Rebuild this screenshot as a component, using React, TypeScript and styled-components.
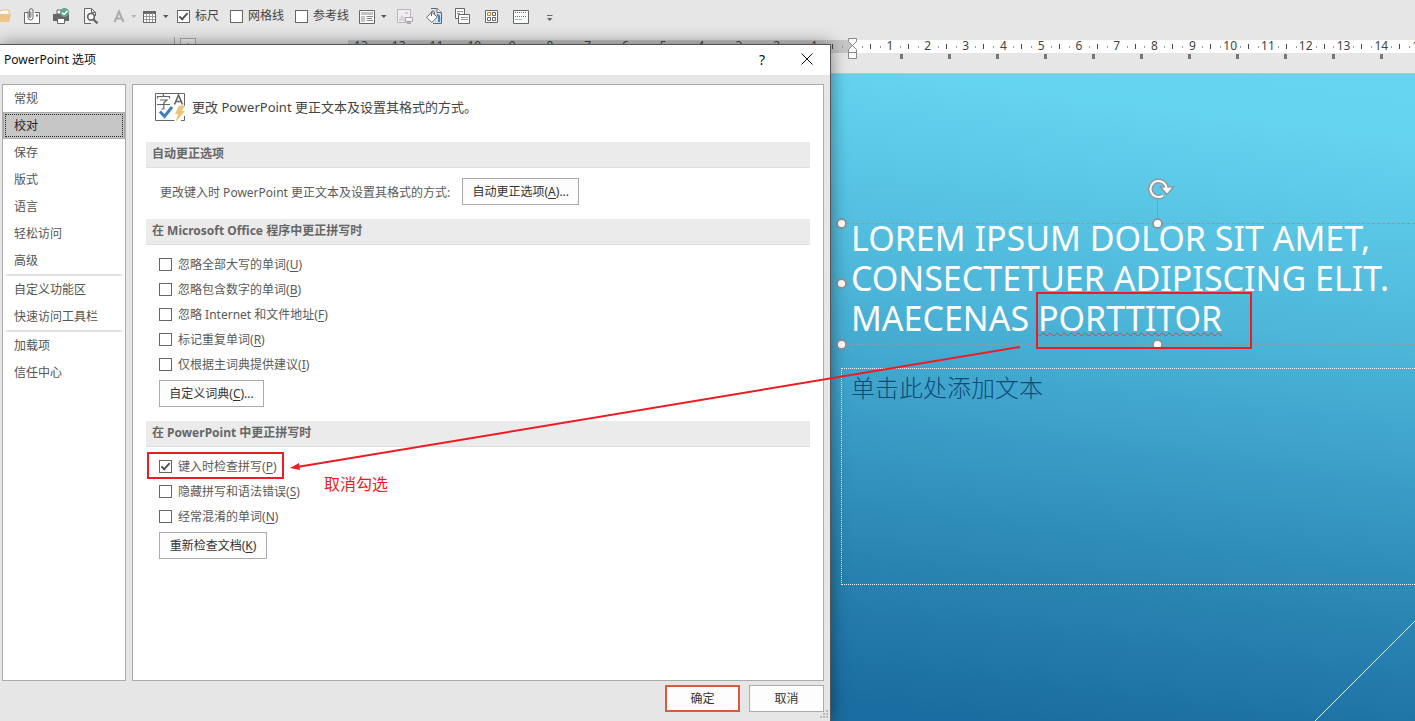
import React from "react";
import styled, { createGlobalStyle, css } from "styled-components";

const UI_FONT = '"Noto Sans", "Noto Sans CJK SC", sans-serif';

const GlobalStyle = createGlobalStyle`
  *, *::before, *::after { box-sizing: border-box; }
  body { margin: 0; background: #e6e6e6; font-family: ${UI_FONT}; font-size: 12px; color: #444; }
  button, input { font: inherit; color: inherit; margin: 0; }
  h1, h2, p, ul { margin: 0; padding: 0; font: inherit; }
  u { text-underline-offset: 2px; }
`;

const Window = styled.div`
  position: relative;
  display: flex;
  flex-direction: column;
  min-height: 100vh;
  overflow: hidden;
`;

/* ---------- toolbar ---------- */

const Toolbar = styled.header`
  display: flex;
  align-items: center;
  height: 32px;
  flex: none;
`;

const ToolButton = styled.button<{ $before: number; $width?: number }>`
  flex: none;
  display: flex;
  width: ${(p) => p.$width ?? 16}px;
  height: 18px;
  margin-left: ${(p) => p.$before}px;
  padding: 1px 0;
  border: 0;
  background: none;
`;

const CheckBox = styled.input.attrs({ type: "checkbox" })`
  appearance: none;
  flex: none;
  display: flex;
  justify-content: center;
  width: 13px;
  height: 13px;
  border: 1px solid #666;
  background: #fff;
  &:checked::after {
    content: "";
    width: 5px;
    height: 9px;
    border: solid #555;
    border-width: 0 2px 2px 0;
    transform: rotate(42deg);
  }
`;

const CheckLabel = styled.label<{ $before?: number }>`
  flex: none;
  display: flex;
  align-items: center;
  gap: 5px;
  height: 25px;
  margin-left: ${(p) => p.$before ?? 0}px;
  line-height: 18px;
  white-space: nowrap;
`;

/* ---------- workspace ---------- */

const RulerRow = styled.div`
  display: flex;
  flex: none;
  height: 41px;
  padding-top: 5px;
`;

const ThumbEdge = styled.div`
  flex: none;
  width: 175px;
  border-right: 1px solid #ababab;
`;

const ScrollUp = styled.button`
  flex: none;
  display: flex;
  justify-content: center;
  width: 16px;
  height: 17px;
  margin: 1px 152px 0 5px;
  padding: 4px 0 0;
  border: 1px solid #ababab;
  background: #f0f0f0;
`;

const RulerArea = styled.div`
  position: relative;
  flex: 1;
  min-width: 0;
  padding-top: 3px;
`;

const Ruler = styled.div`
  height: 13px;
  overflow-x: clip;
  background: linear-gradient(90deg, #c6c6c6 504px, #fff 504px);
`;

const RulerScale = styled.div`
  display: grid;
  grid-template-columns: repeat(29, 1fr);
  width: 1096px;
  margin-left: -6px;
`;

const RulerCell = styled.span`
  height: 13px;
  line-height: 12px;
  text-align: center;
  color: #444;
  background:
    linear-gradient(#444, #444) right 4px / 1px 5px no-repeat,
    linear-gradient(#999, #999) 24% 6px / 1px 2px no-repeat,
    linear-gradient(#999, #999) 78% 6px / 1px 2px no-repeat;
`;

const TabStops = styled.div`
  height: 5px;
  margin: 1px 0 0 552px;
  background: repeating-linear-gradient(90deg, #777 0 3px, transparent 3px 48px);
`;

const IndentMarker = styled.svg`
  position: absolute;
  left: 498px;
  top: 1px;
`;

const Workspace = styled.div`
  display: flex;
  flex: 1;
  border-top: 1px solid #bcc4c8;
`;

const BehindDialog = styled.div`
  flex: none;
  width: 831px;
`;

const Slide = styled.main`
  position: relative;
  flex: 1;
  min-width: 0;
  overflow: hidden;
  background: linear-gradient(187deg, #66d5f1 0%, #65d4f0 9%, #4db6d9 38%, #3a9cc6 58%, #2a85b3 76%, #1a6da0 97%);
`;

const TitleBox = styled.section`
  position: absolute;
  left: 10px;
  right: -60px;
  top: 149px;
  height: 122px;
  border: 1px dashed #8f9a9e;
  padding-left: 9px;
`;

const TitleText = styled.h1`
  font-family: "Noto Sans", "Open Sans", sans-serif;
  font-size: 34px;
  line-height: 40px;
  color: #fff;
  white-space: pre;
  margin-top: -6px;
`;

const TitleLine = styled.span`
  display: block;
`;

const Misspelled = styled.span`
  text-decoration: underline wavy #e0393e 1px;
  text-underline-offset: 1px;
  text-decoration-skip-ink: none;
`;

const BodyBox = styled.section`
  position: absolute;
  left: 10px;
  right: -60px;
  top: 294px;
  height: 217px;
  border: 1px dotted #f2f6f8;
  padding-left: 9px;
  font-size: 24px;
  font-weight: 300;
  line-height: 37px;
  color: #0f4c78;
`;

const SlideDrawing = styled.svg`
  position: absolute;
  inset: 0;
  width: 100%;
  height: 100%;
`;

/* ---------- options dialog ---------- */

const Dialog = styled.div`
  position: absolute;
  left: 0;
  top: 44px;
  bottom: 0;
  width: 831px;
  display: flex;
  flex-direction: column;
  border: solid #555;
  border-width: 1px 1px 0 0;
  background: #e6e6e6;
  box-shadow: 0 0 16px rgba(0, 0, 0, 0.45);
`;

const TitleBar = styled.div`
  display: flex;
  align-items: center;
  height: 30px;
  flex: none;
  padding: 0 16px 0 4px;
  background: #fff;
  color: #111;
`;

const Caption = styled.h2`
  flex: 1;
  padding-bottom: 2px;
`;

const CaptionButton = styled.button`
  width: 14px;
  height: 20px;
  margin-left: 31px;
  padding: 0;
  border: 0;
  background: none;
  font-size: 14px;
  line-height: 20px;
  color: #111;
`;

const DialogBody = styled.div`
  display: flex;
  flex: 1;
  gap: 6px;
  padding: 9px 6px 0 2px;
`;

const Nav = styled.nav`
  width: 124px;
  flex: none;
  display: flex;
  flex-direction: column;
  border: 1px solid #ababab;
  background: #fff;
`;

const NavItem = styled.button<{ $selected?: boolean }>`
  flex: none;
  height: 27px;
  padding: 0 0 2px 11px;
  border: 0;
  background: none;
  text-align: left;
  color: #555;
  ${(p) =>
    p.$selected &&
    css`
      background: #c6c6c6;
      color: #222;
      border: 1px solid #ababab;
      padding-left: 10px;
      outline: 1px dotted #222;
      outline-offset: -3px;
    `}
`;

const NavRule = styled.hr`
  flex: none;
  width: 116px;
  height: 2px;
  margin: 0 auto;
  border: 0;
  background: #e1e1e1;
`;

const Panel = styled.div`
  flex: 1;
  border: 1px solid #ababab;
  background: #fff;
  padding: 7px 13px;
  color: #5a5a5a;
`;

const Intro = styled.p`
  display: flex;
  align-items: center;
  gap: 6px;
  height: 30px;
  margin: 0 0 20px 8px;
  font-size: 13px;
  color: #444;
`;

const IntroText = styled.span`
  padding-bottom: 2px;
`;

const GroupTitle = styled.h2`
  height: 26px;
  padding-left: 6px;
  border-bottom: 1px solid #dedede;
  background: #ebebeb;
  font-weight: 700;
  line-height: 24px;
  color: #666;
`;

const SettingRow = styled.div`
  display: flex;
  align-items: center;
  gap: 12px;
  padding: 10px 0 14px 14px;
`;

const Options = styled.div`
  display: flex;
  flex-direction: column;
  align-items: flex-start;
  padding: 7px 0 14px 13px;
`;

const OptionLabel = styled(CheckLabel)`
  gap: 6px;
`;

const PushButton = styled.button<{ $width: number; $default?: boolean; $spaced?: boolean }>`
  width: ${(p) => p.$width}px;
  height: 27px;
  margin-top: ${(p) => (p.$spaced ? 3 : 0)}px;
  padding: 0 0 1px;
  border: ${(p) => (p.$default ? "2px solid #dc5939" : "1px solid #ababab")};
  background: #fdfdfd;
  color: #333;
  white-space: nowrap;
`;

const Footer = styled.div`
  display: flex;
  justify-content: flex-end;
  gap: 9px;
  flex: none;
  padding: 4px 6px 9px 0;
`;

const Grip = styled.svg`
  position: absolute;
  right: 1px;
  bottom: 2px;
`;

/* ---------- annotations ---------- */

const Highlight = styled.div<{ $x: number; $y: number; $w: number; $h: number }>`
  position: absolute;
  left: ${(p) => p.$x}px;
  top: ${(p) => p.$y}px;
  width: ${(p) => p.$w}px;
  height: ${(p) => p.$h}px;
  border: 2px solid #ed1c24;
  pointer-events: none;
`;

const ArrowLayer = styled.svg`
  position: absolute;
  inset: 0;
  width: 100%;
  height: 100%;
  pointer-events: none;
`;

const Note = styled.p`
  position: absolute;
  left: 324px;
  top: 472px;
  font-size: 16px;
  line-height: 24px;
  color: #ed1c24;
`;

/* ---------- icons ---------- */

const Icon = ({ children, w = 16 }: { children: React.ReactNode; w?: number }) => (
  <svg width={w} height="16" viewBox={`0 0 ${w} 16`} fill="none" stroke="#666" strokeWidth="1" aria-hidden="true">
    {children}
  </svg>
);

const Caret = ({ color = "#555" }: { color?: string }) => (
  <Icon w={6}>
    <path d="M0 7h5.5L2.75 10z" fill={color} stroke="none" />
  </Icon>
);

const FolderIcon = () => (
  <Icon>
    <path d="M1 5V3h5l1-1h7v4" fill="#fff" stroke="#eabf7c" />
    <path d="M0 6h16l-1.5 8H0z" fill="#eec683" stroke="none" />
  </Icon>
);
const MailClipIcon = () => (
  <Icon>
    <path d="M4 4.5H.5v11h15v-11H11" fill="#fff" />
    <path d="M4 3.500v6a2.500 2.500 0 0 0 5 0V2.500a1.800 1.800 0 0 0-3.600 0V9a.8.8 0 0 0 1.500 0V4" />
    <path d="M12 6.500h2v2h-2z" fill="#3f7dbd" stroke="none" />
  </Icon>
);
const PrinterIcon = () => (
  <Icon>
    <path d="M4 2h5v4H4z" fill="#fff" />
    <path d="M0 6h16v7H0z" fill="#666" stroke="none" />
    <path d="M4.500 10.500h7v5h-7z" fill="#fff" />
    <circle cx="11.500" cy="4.500" r="4.500" fill="#5fa58d" stroke="none" />
    <path d="M9 4.500l2 2 3.500-3.800" stroke="#fff" strokeWidth="1.300" />
  </Icon>
);
const PreviewIcon = () => (
  <Icon>
    <path d="M8 15.500H1.500V.500h7l4 4V8M8.500.500v4h4" fill="#f4f4f4" />
    <circle cx="8" cy="8.800" r="3.300" fill="#fff" strokeWidth="1.600" />
    <path d="M10.300 11.200l4.200 4.200" strokeWidth="2.200" />
  </Icon>
);
const TableIcon = () => (
  <Icon>
    <path d="M1.500 3.500h12v11h-12z" fill="#fff" />
    <path d="M1 3h13v3H1z" fill="#666" stroke="none" />
    <path d="M1.500 8.500h12M1.500 11.500h12M4.500 5v9.500M7.500 5v9.500M10.500 5v9.500" stroke="#999" />
    <path d="M1.500 3.500h12v11h-12z" />
  </Icon>
);
const LayoutIcon = () => (
  <Icon>
    <path d="M.5 2.500h15v13H.5z" fill="#fff" />
    <path d="M2 4h12v3H2zM2 8h4v6H2z" fill="#c4c4c4" stroke="none" />
    <path d="M7.500 8.500H14M7.500 10.500H13M7.500 12.500H14" stroke="#888" />
  </Icon>
);
const PictureIcon = () => (
  <Icon>
    <path d="M.5 1.500h13v13H.5z" fill="#f1ebf2" stroke="#b9b3ba" />
    <circle cx="9.500" cy="5" r="1.300" fill="#d0c8d1" stroke="none" />
    <path d="M2 11l3-4 4 4v2H2z" fill="#d9d2da" stroke="none" />
    <path d="M8.500 9.500h7v4h-7zM12 13.500v2M10 15.500h4" fill="#f4f0f5" stroke="#aaa5ab" />
  </Icon>
);
const FillIcon = () => (
  <Icon>
    <path d="M5 .5h6l4.500 4v11H7" fill="#d5e3f0" />
    <path d="M11 .5v4h4.500" fill="#fff" />
    <path d="M11 7c2.500 0 2.500 3 2 7" stroke="#3f7dbd" strokeWidth="2" />
    <path d="M5.500 4L.8 9.500l5 5 5.500-5.500z" fill="#fff" />
    <path d="M5.500 8V4.500a1.500 1.500 0 0 1 3 0V7" />
  </Icon>
);
const CopyIcon = () => (
  <Icon>
    <path d="M.5.500h9v10h-9z" fill="#fff" />
    <path d="M2 3.500h6M2 5.500h3" stroke="#999" />
    <path d="M3.500 6.500h11v9h-11z" fill="#fff" />
    <path d="M6 9.500h7M6 11.500h7" stroke="#999" />
  </Icon>
);
const GridIcon = () => (
  <Icon>
    <path d="M1.500 2.500h12v12h-12z" fill="#fff" />
    <path d="M3.500 4.500h3v3h-3z" stroke="#e07b25" fill="#fff" />
    <path d="M8.500 4.500h3v3h-3zM3.500 9.500h3v3h-3zM8.500 9.500h3v3h-3z" />
  </Icon>
);
const NotesIcon = () => (
  <Icon>
    <path d="M.5 2.500h15v13H.5z" fill="#fff" />
    <path d="M2 4.500h12M2 8.500h12" stroke="#3f7dbd" strokeDasharray="1 1" />
    <path d="M2 11.500h7" stroke="#9fb4c8" />
  </Icon>
);
const OverflowIcon = () => (
  <Icon w={8}>
    <path d="M1 7.500h5.500" />
    <path d="M1 10h5.500l-2.750 3z" fill="#666" stroke="none" />
  </Icon>
);
const LetterIcon = () => (
  <Icon>
    <path d="M3.500 14L8 3.500 12.500 14M5 10.500h6" stroke="#aaa" strokeWidth="2" />
  </Icon>
);

const ProofingIcon = () => (
  <svg width="32" height="32" viewBox="0 0 32 32" fill="none" aria-hidden="true">
    <path d="M30.500 15V2.500H1.500v27h19M27 29.500h3.500V25" stroke="#666" />
    <path d="M3.500 7.500V5.500h12v2M9 3l1 2.500M6 9h7l-3.500 3M3 13.500h13M9.800 12v6H7.500" stroke="#666" strokeWidth="1.200" />
    <path d="M20.500 13.500l4-9.500 4 9.500M22 10.500h5" stroke="#666" strokeWidth="1.600" />
    <path d="M6 20.500l4.500 5L18 16" stroke="#3f7dbd" strokeWidth="3" />
    <path d="M25 14.500h6l-3 5.500h3L21.500 31l2.500-8h-3z" fill="#edc47c" />
  </svg>
);

/* ---------- composition ---------- */

const navGroups = [
  ["常规", "校对", "保存", "版式", "语言", "轻松访问", "高级"],
  ["自定义功能区", "快速访问工具栏"],
  ["加载项", "信任中心"],
];

const officeOptions: [string, string][] = [
  ["忽略全部大写的单词", "U"],
  ["忽略包含数字的单词", "B"],
  ["忽略 Internet 和文件地址", "F"],
  ["标记重复单词", "R"],
  ["仅根据主词典提供建议", "I"],
];

const pptOptions: [string, string, boolean][] = [
  ["键入时检查拼写", "P", true],
  ["隐藏拼写和语法错误", "S", false],
  ["经常混淆的单词", "N", false],
];

const Option = ({ text, hotkey, checked }: { text: string; hotkey: string; checked?: boolean }) => (
  <OptionLabel>
    <CheckBox defaultChecked={checked} />
    <span>
      {text}(<u>{hotkey}</u>)
    </span>
  </OptionLabel>
);

const rulerNumbers = Array.from({ length: 29 }, (_, i) => Math.abs(i - 13));

const handles = [
  [10.5, 149.5],
  [326.5, 149.5],
  [10.5, 209.5],
  [10.5, 270.5],
  [326.5, 270.5],
];

export default function App() {
  return (
    <Window>
      <GlobalStyle />
      <Toolbar>
        <ToolButton $before={-5} aria-label="打开"><FolderIcon /></ToolButton>
        <ToolButton $before={13} aria-label="电子邮件"><MailClipIcon /></ToolButton>
        <ToolButton $before={13} aria-label="快速打印"><PrinterIcon /></ToolButton>
        <ToolButton $before={14} aria-label="打印预览"><PreviewIcon /></ToolButton>
        <ToolButton $before={12} aria-label="字体颜色"><LetterIcon /></ToolButton>
        <ToolButton $before={4} $width={6} aria-label="更多颜色"><Caret color="#b5b5b5" /></ToolButton>
        <ToolButton $before={5} aria-label="表格"><TableIcon /></ToolButton>
        <ToolButton $before={5} $width={6} aria-label="更多表格"><Caret /></ToolButton>
        <CheckLabel $before={8}><CheckBox defaultChecked />标尺</CheckLabel>
        <CheckLabel $before={11}><CheckBox />网格线</CheckLabel>
        <CheckLabel $before={11}><CheckBox />参考线</CheckLabel>
        <ToolButton $before={10} aria-label="版式"><LayoutIcon /></ToolButton>
        <ToolButton $before={6} $width={6} aria-label="更多版式"><Caret /></ToolButton>
        <ToolButton $before={10} aria-label="图片"><PictureIcon /></ToolButton>
        <ToolButton $before={13} aria-label="背景格式"><FillIcon /></ToolButton>
        <ToolButton $before={13} aria-label="复制幻灯片"><CopyIcon /></ToolButton>
        <ToolButton $before={13} aria-label="浏览"><GridIcon /></ToolButton>
        <ToolButton $before={13} aria-label="备注"><NotesIcon /></ToolButton>
        <ToolButton $before={17} $width={8} aria-label="自定义工具栏"><OverflowIcon /></ToolButton>
      </Toolbar>

      <RulerRow>
        <ThumbEdge />
        <ScrollUp aria-label="向上滚动">
          <svg width="8" height="5" aria-hidden="true"><path d="M4 0l4 5H0z" fill="#555" /></svg>
        </ScrollUp>
        <RulerArea>
          <Ruler>
            <RulerScale>
              {rulerNumbers.map((n, i) => (
                <RulerCell key={i}>{n || ""}</RulerCell>
              ))}
            </RulerScale>
          </Ruler>
          <TabStops />
          <IndentMarker width="13" height="23" viewBox="0 0 13 23" fill="#fff" stroke="#888" aria-hidden="true">
            <path d="M2.500.500h8v3l-4 4-4-4zM6.500 7.500l4 4v3h-8v-3zM2.500 14.500h8v6h-8z" />
          </IndentMarker>
        </RulerArea>
      </RulerRow>

      <Workspace>
        <BehindDialog />
        <Slide>
          <TitleBox>
            <TitleText>
              <TitleLine>LOREM IPSUM DOLOR SIT AMET,</TitleLine>
              <TitleLine>CONSECTETUER ADIPISCING ELIT.</TitleLine>
              <TitleLine>
                MAECENAS <Misspelled>PORTTITOR</Misspelled>
              </TitleLine>
            </TitleText>
          </TitleBox>
          <BodyBox>单击此处添加文本</BodyBox>
          <SlideDrawing aria-hidden="true">
            <path d="M484 647L594 537" stroke="#e4f1f7" />
            <path d="M326.500 124v22" stroke="#949a9c" />
            <g fill="none">
              <path d="M335.500 115a8 8 0 1 0-3.500 6.600" stroke="#949a9c" strokeWidth="5" />
              <path d="M329.500 113h13l-6.500 7.500z" fill="#fff" stroke="#949a9c" strokeWidth="1.500" />
              <path d="M335.500 115a8 8 0 1 0-3.500 6.600" stroke="#fff" strokeWidth="2" />
            </g>
            {handles.map(([x, y]) => (
              <circle key={`${x}-${y}`} cx={x} cy={y} r="4.500" fill="#fff" stroke="#8f9192" strokeWidth="1.800" />
            ))}
          </SlideDrawing>
        </Slide>
      </Workspace>

      <Dialog role="dialog" aria-label="PowerPoint 选项">
        <TitleBar>
          <Caption>PowerPoint 选项</Caption>
          <CaptionButton aria-label="帮助">?</CaptionButton>
          <CaptionButton aria-label="关闭">
            <svg width="12" height="12" viewBox="0 0 12 12" stroke="#111" aria-hidden="true"><path d="M.5.500l11 11M11.500.500l-11 11" /></svg>
          </CaptionButton>
        </TitleBar>
        <DialogBody>
          <Nav>
            {navGroups.map((group, i) => (
              <React.Fragment key={i}>
                {i > 0 && <NavRule />}
                {group.map((item) => (
                  <NavItem key={item} $selected={item === "校对"}>{item}</NavItem>
                ))}
              </React.Fragment>
            ))}
          </Nav>
          <Panel>
            <Intro>
              <ProofingIcon />
              <IntroText>更改 PowerPoint 更正文本及设置其格式的方式。</IntroText>
            </Intro>
            <GroupTitle>自动更正选项</GroupTitle>
            <SettingRow>
              <span>更改键入时 PowerPoint 更正文本及设置其格式的方式:</span>
              <PushButton $width={117}>自动更正选项(<u>A</u>)...</PushButton>
            </SettingRow>
            <GroupTitle>在 Microsoft Office 程序中更正拼写时</GroupTitle>
            <Options>
              {officeOptions.map(([text, key]) => (
                <Option key={key} text={text} hotkey={key} />
              ))}
              <PushButton $width={105} $spaced>自定义词典(<u>C</u>)...</PushButton>
            </Options>
            <GroupTitle>在 PowerPoint 中更正拼写时</GroupTitle>
            <Options>
              {pptOptions.map(([text, key, checked]) => (
                <Option key={key} text={text} hotkey={key} checked={checked} />
              ))}
              <PushButton $width={108} $spaced>重新检查文档(<u>K</u>)</PushButton>
            </Options>
          </Panel>
        </DialogBody>
        <Footer>
          <PushButton $width={75} $default>确定</PushButton>
          <PushButton $width={75}>取消</PushButton>
        </Footer>
        <Grip width="9" height="9" viewBox="0 0 9 9" fill="#b8b8b8" aria-hidden="true">
          <path d="M6 0h2v2H6zM3 3h2v2H3zM6 3h2v2H6zM0 6h2v2H0zM3 6h2v2H3zM6 6h2v2H6z" />
        </Grip>
      </Dialog>

      <Highlight $x={147} $y={452} $w={137} $h={27} />
      <Highlight $x={1036} $y={292} $w={216} $h={57} />
      <ArrowLayer aria-hidden="true">
        <path d="M1020 347L297 467" stroke="#ed1c24" strokeWidth="2" />
        <path d="M290 468l9-5 1 7z" fill="#ed1c24" />
      </ArrowLayer>
      <Note>取消勾选</Note>
    </Window>
  );
}
